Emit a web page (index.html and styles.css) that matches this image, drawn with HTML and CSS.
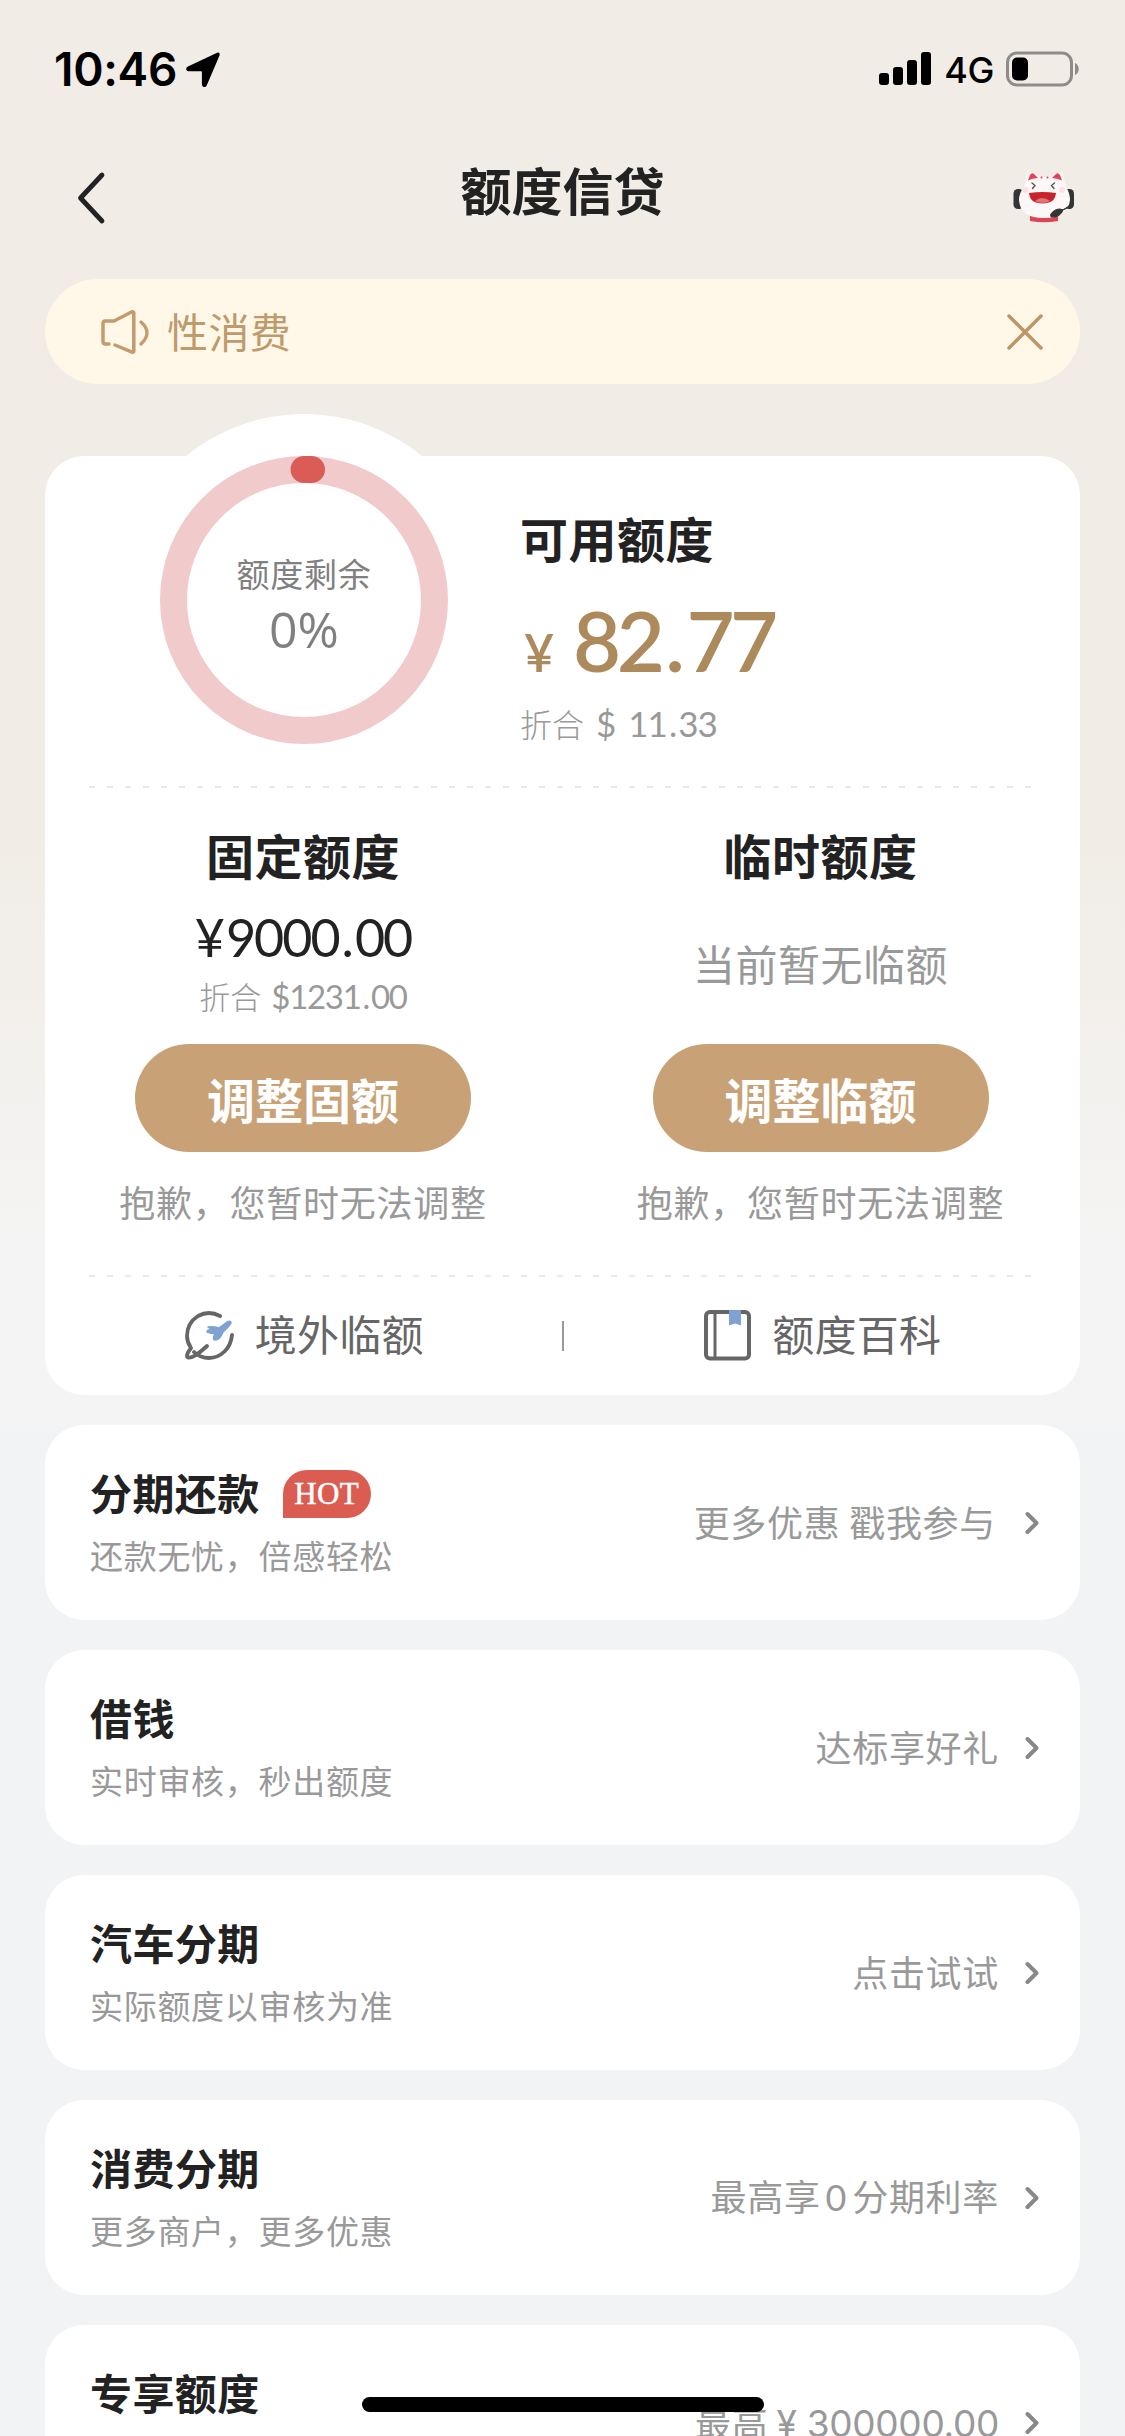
FILE: index.html
```html
<!DOCTYPE html>
<html lang="zh-CN">
<head>
<meta charset="utf-8">
<title>额度信贷</title>
<link rel="stylesheet" href="styles.css">
</head>
<body>
<div class="screen">
  <div class="status">
    <span class="time">10:46</span>
    <svg class="loc" width="36" height="36" viewBox="0 0 36 36"><path d="M33.500 3 20.800 32.800c-.8 1.800-2.800 1.400-2.800-.6V20q0-1.800-1.800-1.800H4c-2 0-2.400-1.800-.6-2.700L32.600 1.800c.9-.4 1.300.2.900 1.200z" stroke="#000" stroke-width="2.200" stroke-linejoin="round"/></svg>
    <svg class="signal" width="53" height="34" viewBox="0 0 53 34"><rect x="0" y="21" width="10" height="12" rx="3"/><rect x="14" y="15" width="10" height="18" rx="3"/><rect x="28" y="8" width="10" height="25" rx="3"/><rect x="42" y="0" width="10" height="33" rx="3"/></svg>
    <span class="net">4G</span>
    <svg class="battery" width="74" height="36" viewBox="0 0 74 36"><rect x="1.500" y="2" width="64" height="32" rx="9.500" fill="none" stroke="#8f8c88" stroke-width="3"/><rect x="6" y="6.500" width="16" height="23" rx="5"/><path d="M69 12c5 2 5 10 0 12z" fill="#8f8c88"/></svg>
  </div>

  <header class="nav">
    <svg class="back" width="32" height="54" viewBox="0 0 32 54"><path d="M28 4 6.500 27 28 50" fill="none" stroke="#222" stroke-width="4.800" stroke-linecap="round" stroke-linejoin="round"/></svg>
    <h1>额度信贷</h1>
    <svg class="mascot" width="64" height="52" viewBox="0 0 64 52">
      <path d="M18 43h28v7q-14 2.500-28 0z" fill="#dc4553"/>
      <rect x="1.500" y="18" width="10" height="20" rx="4.500" fill="#343434"/><rect x="52" y="18" width="10" height="20" rx="4.500" fill="#343434"/>
      <path d="M12 16 15 3q2-4 6-1l6 4h12l6-4q4-3 6 1l3 13q4 6 4 13-2 18-26 18T7 29q0-7 5-13z" fill="#fcf8f7"/>
      <path d="M16 9.500 18 4q2-3 4-1l4 4q-6 0-10 2.500zM40 7l4-4q2-2 4 1l2 5.500Q45 7 40 7z" fill="#e63f56"/>
      <circle cx="29.500" cy="6.500" r="1" fill="#e63f56"/><circle cx="35.500" cy="6.500" r="1" fill="#e63f56"/>
      <path d="m20 12 3 2.500-2.500 3M42.500 12l-3 2.500 2.500 3" fill="none" stroke="#555" stroke-width="1.400" stroke-linecap="round"/>
      <circle cx="13.500" cy="19" r="3" fill="#ffdfe2"/><circle cx="50" cy="19" r="3" fill="#ffdfe2"/>
      <path d="M17 22q14-2 27 0-1 10.500-13.500 10.500T17 22z" fill="#c9222b"/><path d="M23 30q7-6 15 0-7 4-15 0z" fill="#df7377"/>
      <path d="M39 43q4-5 9-5l3 1q-3 7-11 7-2-1-1-3zM50 39q5-1 8-5" fill="#343434" stroke="#343434" stroke-width="1.200"/>
    </svg>
  </header>

  <div class="notice">
    <svg class="speaker" width="50" height="46" viewBox="0 0 50 46"><path d="M9 35H5.500Q3 35 3 32.500v-18Q3 12 5.500 12H14L32 2.800q1.800-.5 1.800 1.200v38q0 1.700-1.800 1.200L15 36" fill="none" stroke="#c29c6c" stroke-width="3.500" stroke-linecap="round" stroke-linejoin="round"/><path d="M41 13q12 10.500 0 22" fill="none" stroke="#c29c6c" stroke-width="3.300" stroke-linecap="round"/></svg>
    <span class="notice-text">性消费</span>
    <svg class="close" width="36" height="36" viewBox="0 0 36 36"><path d="M2 2 34 34M34 2 2 34" stroke="#bd9666" stroke-width="3.500" stroke-linecap="round"/></svg>
  </div>

  <section class="card">
    <div class="summary">
      <div class="gauge">
        <svg class="ring" width="372" height="372" viewBox="0 0 372 372"><circle cx="186" cy="186" r="186" fill="#fff"/><circle cx="186" cy="186" r="130.500" fill="none" stroke="#f1cbcb" stroke-width="27"/><path d="M186 55.500h7.500" stroke="#db5c57" stroke-width="27" stroke-linecap="round"/></svg>
        <div class="gauge-text"><span class="gauge-label">额度剩余</span><span class="gauge-value">0%</span></div>
      </div>
      <div class="available">
        <h2>可用额度</h2>
        <div class="big"><span class="yen">¥</span><span class="amount">82<i>.</i>77</span></div>
        <div class="usd"><span>折合</span><b>$ 11<i>.</i>33</b></div>
      </div>
    </div>
    <svg class="dash" width="945" height="2"><path d="M0 1h945" stroke="#e8e8e8" stroke-width="2" stroke-dasharray="6 12"/></svg>
    <div class="limits">
      <div class="limit">
        <h2>固定额度</h2>
        <div class="fixed">¥<span>9000<i>.</i>00</span></div>
        <div class="usd small"><span>折合</span><b>$1231<i>.</i>00</b></div>
        <button class="btn">调整固额</button>
        <p class="sorry">抱歉，您暂时无法调整</p>
      </div>
      <div class="limit">
        <h2>临时额度</h2>
        <div class="none">当前暂无临额</div>
        <button class="btn">调整临额</button>
        <p class="sorry">抱歉，您暂时无法调整</p>
      </div>
    </div>
    <svg class="dash" width="945" height="2"><path d="M0 1h945" stroke="#e8e8e8" stroke-width="2" stroke-dasharray="6 12"/></svg>
    <div class="links">
      <div class="link">
        <svg width="50" height="50" viewBox="0 0 50 50"><path d="M36 6Q25 0 14 6 3 13 3 26q0 6 4 12-6 8-3 9.500Q9 49 23 36M10 42q6 6 15 6 9 0 16-7 6-6 7-16" fill="none" stroke="#666" stroke-width="3.800" stroke-linecap="round" stroke-linejoin="round"/><path d="M24 17q5-1 11 1l8-6q4-2 4 1-3 5-8 9-3 8-8 8-3 0 0-7-5 1-8-1 0-3 5-2z" fill="#7fa2d3" stroke="#7fa2d3" stroke-width="1.500" stroke-linejoin="round"/></svg>
        <span>境外临额</span>
      </div>
      <i class="sep"></i>
      <div class="link">
        <svg width="48" height="52" viewBox="0 0 48 52"><rect x="3" y="3" width="43" height="46.500" rx="4" fill="none" stroke="#666" stroke-width="4"/><path d="M12 3v46" stroke="#666" stroke-width="3"/><path d="M26 1h12v15.500l-6-2-6 2z" fill="#7fa2d3"/></svg>
        <span>额度百科</span>
      </div>
    </div>
  </section>

  <section class="row">
    <div><h3>分期还款<span class="hot">HOT</span></h3><p>还款无忧，倍感轻松</p></div>
    <span class="more first">更多优惠 戳我参与</span><svg class="chev" width="14" height="24" viewBox="0 0 14 24"><path d="m2.500 3 9 9-9 9" /></svg>
  </section>
  <section class="row">
    <div><h3>借钱</h3><p>实时审核，秒出额度</p></div>
    <span class="more">达标享好礼</span><svg class="chev" width="14" height="24" viewBox="0 0 14 24"><path d="m2.500 3 9 9-9 9" /></svg>
  </section>
  <section class="row">
    <div><h3>汽车分期</h3><p>实际额度以审核为准</p></div>
    <span class="more">点击试试</span><svg class="chev" width="14" height="24" viewBox="0 0 14 24"><path d="m2.500 3 9 9-9 9" /></svg>
  </section>
  <section class="row">
    <div><h3>消费分期</h3><p>更多商户，更多优惠</p></div>
    <span class="more">最高享<span class="zero">0</span>分期利率</span><svg class="chev" width="14" height="24" viewBox="0 0 14 24"><path d="m2.500 3 9 9-9 9" /></svg>
  </section>
  <section class="row">
    <div><h3>专享额度</h3><p>&nbsp;</p></div>
    <span class="more last">最高<span class="max">¥ 300000.00</span></span><svg class="chev" width="14" height="24" viewBox="0 0 14 24"><path d="m2.500 3 9 9-9 9" /></svg>
  </section>
  <div class="home"></div>
</div>
</body>
</html>
```
FILE: styles.css
```css
* { box-sizing: border-box; }
html, body { margin: 0; overflow: hidden; }
body { width: 1125px; height: 2436px; font-family: "Noto Sans CJK SC", sans-serif; color: #222; }
h1, h2, h3, p { margin: 0; }
i { font-style: normal; }
svg { display: block; flex: none; }
.screen {
  position: relative; width: 1125px; height: 2436px; overflow: hidden; padding: 0 45px;
  display: flex; flex-direction: column;
  background: linear-gradient(#f1ece5 0, #f1ece5 800px, #f4f4f4 1260px, #f4f4f4 1425px, #f2f3f5 1425px);
}
.screen > * { flex: none; }

.status { height: 138px; display: flex; align-items: center; padding-left: 9px; font-family: Inter, sans-serif; color: #000; }
.time { width: 134px; font-size: 46px; font-weight: 600; line-height: 60px; letter-spacing: -.3px; }
.loc { margin-left: 4px; margin-top: 2px; }
.signal { margin-left: 658px; }
.net { margin-left: 12px; width: 65px; font-size: 36px; font-weight: 500; line-height: 48px; letter-spacing: -.5px; margin-top: 2px; }

.nav { height: 141px; display: flex; align-items: flex-start; justify-content: space-between; padding: 14px 4px 0 29px; }
.back { margin-top: 19px; }
.nav h1 { font-size: 51px; line-height: 74px; font-weight: 700; margin-left: 7px; }
.mascot { margin-top: 19px; }

.notice { height: 105px; border-radius: 53px; background: #fff7e8; display: flex; align-items: center; padding: 0 37px 0 55px; color: #bf9a6b; }
.notice-text { margin: -4px 0 0 17px; flex: 1; font-size: 41px; line-height: 60px; font-weight: 400; letter-spacing: .4px; }

.card { margin-top: 72px; height: 939px; border-radius: 39px; background: #fff; display: flex; flex-direction: column; }
.summary { height: 330px; display: flex; }
.gauge { margin: -42px 0 0 73px; width: 372px; height: 372px; display: grid; }
.ring, .gauge-text { grid-area: 1 / 1; }
.gauge-text { display: flex; flex-direction: column; align-items: center; padding-top: 135px; color: #808080; }
.gauge-label { font-size: 33px; line-height: 48px; letter-spacing: .7px; }
.gauge-value { font-family: "Open Sans", sans-serif; font-size: 50px; line-height: 64px; letter-spacing: 0; }
.available { margin-left: 30px; padding-top: 46px; }
h2 { font-size: 48px; line-height: 70px; font-weight: 700; letter-spacing: .5px; }
.big { display: flex; align-items: baseline; font-family: Lato, sans-serif; color: #ad8a5c; height: 98px; line-height: 98px; margin-top: 19px; }
.yen { width: 53px; padding-left: 4px; font-size: 52px; font-weight: 600; }
.amount { font-size: 83px; font-weight: 600; letter-spacing: -4.500px; }
.amount i { padding: 0 6px 0 5px; }
.usd { display: flex; align-items: baseline; font-size: 32px; font-weight: 300; color: #999; line-height: 48px; margin-top: 10px; }
.usd b { margin-left: 12px; font-family: Lato, sans-serif; font-size: 35px; font-weight: 400; letter-spacing: -1px; word-spacing: 5px; }
.usd i { padding: 0 2px; }
.usd.small { margin-top: 0; font-size: 31px; }
.small b { font-size: 33px; letter-spacing: -1.300px; margin-left: 10px; }
.dash { margin-left: 44px; }
.limits { height: 487px; display: flex; }
.limit { width: 516px; display: flex; flex-direction: column; align-items: center; padding-top: 31px; }
.limit + .limit { width: 519px; }
.fixed { font-family: Lato, sans-serif; font-size: 52px; line-height: 70px; letter-spacing: -2px; margin-top: 13px; }
.fixed span { margin-left: 3px; }
.fixed i { padding: 0 3px; }
.btn { border: 0; padding: 0; width: 336px; height: 108px; border-radius: 54px; background: #c8a276; color: #fff; font: 700 48px/104px "Noto Sans CJK SC", sans-serif; margin-top: 24px; }
.none { height: 118px; line-height: 122px; margin-top: 13px; font-size: 42px; color: #999; letter-spacing: .5px; }
.sorry { font-size: 36px; line-height: 54px; margin-top: 22px; color: #999; letter-spacing: .75px; }
.links { height: 118px; display: flex; align-items: center; }
.link { flex: 1; display: flex; align-items: center; justify-content: center; gap: 21px; padding-left: 1px; font-size: 42px; line-height: 60px; color: #666; letter-spacing: .3px; }
.link svg { margin-top: -3px; }
.link span { margin-top: -7px; }
.sep { width: 2px; height: 30px; background: #999; }

.row { margin-top: 30px; height: 195px; border-radius: 39px; background: #fff; display: flex; align-items: center; padding: 0 41px 0 45px; }
.row > div { flex: 1; margin-top: -5px; }
h3 { display: flex; align-items: center; height: 62px; font-size: 42px; line-height: 62px; font-weight: 700; letter-spacing: .4px; }
.hot { width: 88px; height: 48px; margin: 4px 0 0 23px; border-radius: 24px 24px 24px 0; background: #db5c50; color: #fff; font: 400 31px/48px "Liberation Serif", serif; letter-spacing: .3px; text-align: center; -webkit-text-stroke: .5px #fff; }
.row p { font-size: 33px; line-height: 50px; margin-top: 7px; color: #999; letter-spacing: .7px; }
.more { font-size: 36px; line-height: 54px; margin-top: -4px; color: #999; letter-spacing: .7px; white-space: nowrap; }
.first { margin-right: 3px; }
.last { margin-top: 0; }
.chev { margin-left: 26px; fill: none; stroke: #888; stroke-width: 4; stroke-linecap: round; stroke-linejoin: round; }
.zero { font-family: Lato, sans-serif; padding: 0 5px; }
.max { font-family: Inter, sans-serif; font-size: 37px; font-weight: 400; margin-left: 8px; letter-spacing: -.3px; }
.home { position: absolute; left: 362px; top: 2397px; width: 402px; height: 15px; border-radius: 8px; background: #000; }
```
